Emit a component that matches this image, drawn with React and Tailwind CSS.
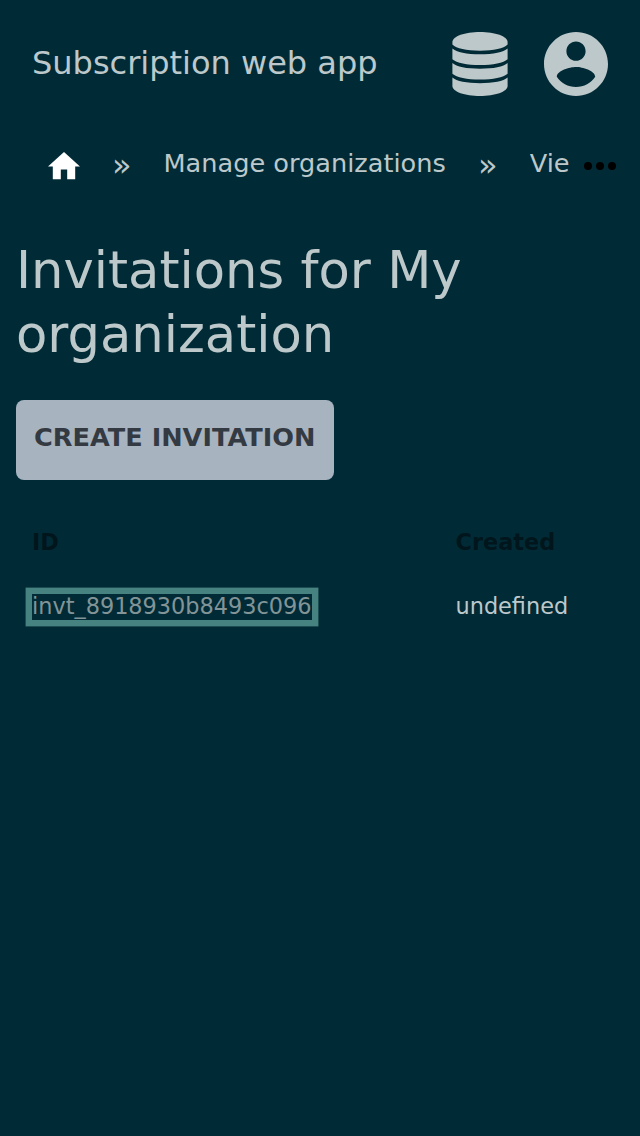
function DatabaseIcon() {
  return (
    <svg className="h-16 w-14" viewBox="0 0 56 64" fill="currentColor">
      <path d="M28 0C13 0 .4 4.300 .4 10v2.500C4.500 16.500 14 18.700 28 18.700s23.500-2.200 27.600-6.200V10C55.600 4.300 43 0 28 0z" />
      <path d="M.4 16.400C4.500 20.300 14.500 22.200 28 22.200S51.500 20.300 55.600 16.400v10.800C51.500 31 41 33.100 28 33.100S4.500 31 .4 27.200z" />
      <path d="M.4 31C4.500 34.900 14.500 36.700 28 36.700S51.500 34.900 55.600 31v10.700C51.500 45.500 41 47.600 28 47.600S4.500 45.500 .4 41.700z" />
      <path d="M.4 45.600C4.500 49.400 14.500 51.200 28 51.200S51.500 49.400 55.600 45.600V54C55.600 59.700 43 64 28 64S.4 59.700 .4 54z" />
    </svg>
  );
}

function AccountIcon() {
  return (
    <svg className="h-16 w-16" viewBox="2 2 20 20" fill="currentColor">
      <path d="M12 2C6.480 2 2 6.480 2 12s4.480 10 10 10 10-4.480 10-10S17.520 2 12 2zm0 3c1.660 0 3 1.340 3 3s-1.340 3-3 3-3-1.340-3-3 1.340-3 3-3zm0 14.200c-2.500 0-4.710-1.280-6-3.220.03-1.990 4-3.080 6-3.080 1.990 0 5.970 1.090 6 3.080-1.290 1.940-3.500 3.220-6 3.220z" />
    </svg>
  );
}

export default function App() {
  return (
    <div className="min-h-[1136px] w-[640px] overflow-hidden bg-[#002b36] font-['DejaVu_Sans',sans-serif] text-[#bdc8ca]">
      <header className="flex h-32 items-center px-8">
        <h1 className="flex-1 pb-0.5 text-[32px] leading-[48px]">Subscription web app</h1>
        <div className="flex gap-9">
          <DatabaseIcon />
          <AccountIcon />
        </div>
      </header>
      <nav className="flex h-[72px] items-center pl-12 text-[25.6px]">
        <svg className="mt-1 h-[27.2px] w-8 text-white" viewBox="2 3 20 17" fill="currentColor">
          <path d="M10 20v-6h4v6h5v-8h3L12 3 2 12h3v8z" />
        </svg>
        <span className="w-[83.5px] pt-0.5 text-center text-[32px] leading-[48px]">»</span>
        <span className="whitespace-nowrap pb-0.5">Manage organizations</span>
        <span className="w-[84px] pt-0.5 text-center text-[32px] leading-[48px]">»</span>
        <span className="w-[39px] overflow-hidden whitespace-nowrap pb-0.5">Vie</span>
        <svg className="ml-auto mr-6 mt-1 h-2 w-8 shrink-0 text-black" viewBox="0 0 32 8" fill="currentColor">
          <circle cx="4" cy="4" r="4" />
          <circle cx="16" cy="4" r="4" />
          <circle cx="28" cy="4" r="4" />
        </svg>
      </nav>
      <main className="px-4 pt-[38px]">
        <h2 className="w-[500px] text-[51.2px] leading-[64px]">Invitations for My organization</h2>
        <button className="mt-[34px] flex h-20 w-[318px] rounded-lg bg-[#a8b3c0] pl-[18px] pt-[18px] text-[25.6px] font-bold leading-[38px] text-[#343a42]">
          CREATE INVITATION
        </button>
        <table className="mt-[30px] w-full table-fixed text-left text-[22.4px] leading-8">
          <thead>
            <tr className="h-16 text-[#00161c]">
              <th className="w-[424px] px-4 font-bold">ID</th>
              <th className="pl-[15.5px] font-bold">Created</th>
            </tr>
          </thead>
          <tbody>
            <tr className="h-16">
              <td className="px-4">
                <a className="inline-block h-[26px] leading-6 text-[#839496] shadow-[0_0_0_6.4px_#468280]">invt_8918930b8493c096</a>
              </td>
              <td className="pl-[15.5px]">undefined</td>
            </tr>
          </tbody>
        </table>
      </main>
    </div>
  );
}
